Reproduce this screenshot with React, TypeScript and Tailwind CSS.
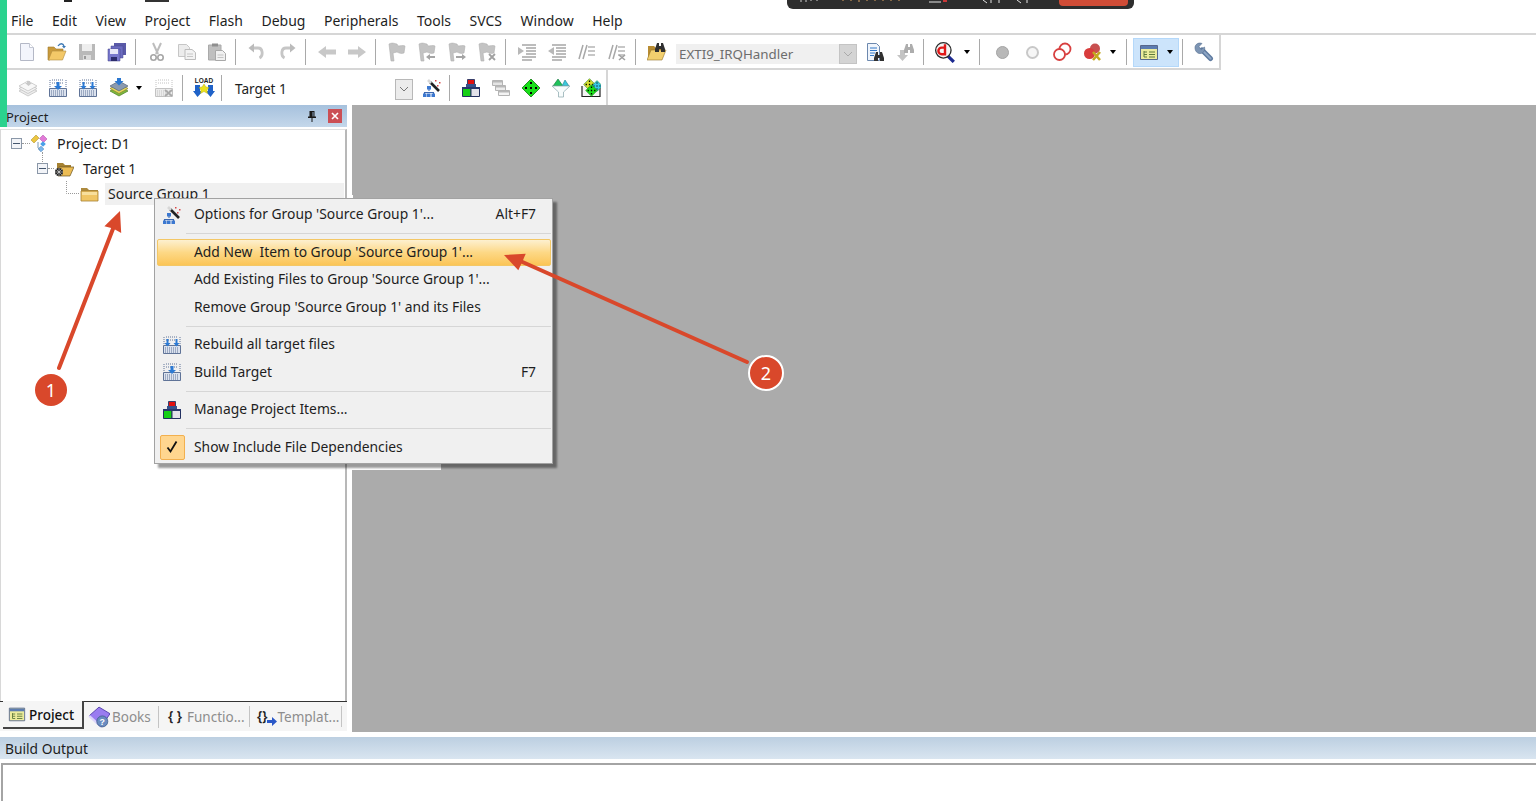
import type { ReactNode } from "react";

const font = "font-['Noto_Sans','Open_Sans',sans-serif]";

const Ico = ({ children, size = 20 }: { children: ReactNode; size?: number }) => (
  <svg width={size} height={size} viewBox="0 0 20 20" className="shrink-0">
    {children}
  </svg>
);

const Slot = ({ children, className = "" }: { children?: ReactNode; className?: string }) => (
  <div className={`w-[30px] h-[30px] shrink-0 flex items-center justify-center ${className}`}>{children}</div>
);

const Sep = ({ className = "ml-[3px] mr-[6px]" }: { className?: string }) => (
  <div className={`w-px h-[26px] bg-[#a9a9a9] shrink-0 ${className}`} />
);

const Caret = ({ className = "w-[13px]" }: { className?: string }) => (
  <div className={`shrink-0 flex justify-center ${className}`}>
    <div className="w-0 h-0 border-x-[3.5px] border-x-transparent border-t-[4px] border-t-black" />
  </div>
);

/* toolbar icons */
const NewIcon = () => (
  <Ico>
    <path d="M3.500 1.500h9l4 4v13h-13z" fill="#f3f5fc" stroke="#b4b8c6" />
    <path d="M12.500 1.500v4h4" fill="#fff" stroke="#c4c8d4" />
  </Ico>
);
const OpenIcon = () => (
  <Ico>
    <path d="M1 5h6l2 2h7v3H6l-3 8H1z" fill="#c99a3c" stroke="#a07a2c" strokeWidth=".6" />
    <path d="M5 9h14l-3.500 9H1.500z" fill="#f3c868" stroke="#b08a3c" strokeWidth=".6" />
    <path d="M11 4c2-3 5-3 6 0" fill="none" stroke="#3c78b4" strokeWidth="1.300" />
    <path d="M15 4h4l-2 2.500z" fill="#3c78b4" />
  </Ico>
);
const SaveIcon = () => (
  <Ico>
    <path d="M2 2h16v16H2z" fill="#b9b9b9" />
    <path d="M5 2h10v7H5z" fill="#eee" />
    <path d="M6 13h8v5H6z" fill="#dcdcdc" />
    <path d="M7 14h2v3H7z" fill="#9a9a9a" />
  </Ico>
);
const SaveAllIcon = () => (
  <Ico>
    <path d="M7 1h12v12H7z" fill="#5a5aa8" />
    <path d="M4 4h12v12H4z" fill="#6c6cc0" stroke="#484890" strokeWidth=".5" />
    <path d="M1 7h12v12H1z" fill="#7878cc" stroke="#3c3c84" strokeWidth=".5" />
    <path d="M3 7h8v5H3z" fill="#e8e8f8" />
    <path d="M4 15h6v4H4z" fill="#2c2c6c" />
  </Ico>
);
const CutIcon = () => (
  <Ico>
    <path d="M6 1l5 11M14 1L9 12" stroke="#bdbdbd" strokeWidth="2" />
    <circle cx="6.500" cy="15.500" r="2.700" fill="none" stroke="#a6a6a6" strokeWidth="1.600" />
    <circle cx="13.500" cy="15.500" r="2.700" fill="none" stroke="#a6a6a6" strokeWidth="1.600" />
  </Ico>
);
const CopyIcon = () => (
  <Ico>
    <path d="M1.500 2.500h8l3 3v9h-11z" fill="#ececec" stroke="#c6c6c6" />
    <path d="M8 7.500h7l3.500 3v7H8z" fill="#f2f2f2" stroke="#bcbcbc" />
    <path d="M10 12h6M10 14.500h6" stroke="#c6c6c6" />
  </Ico>
);
const PasteIcon = () => (
  <Ico>
    <path d="M1.500 3h12.500v15H1.500z" fill="#bfbfbf" stroke="#aaa" />
    <path d="M5 1.500h6v3H5z" fill="#8f8f8f" />
    <path d="M8.500 8.500h7l3 3v7h-10z" fill="#f0f0f0" stroke="#a8a8a8" />
    <path d="M10.500 13h6M10.500 15.500h6" stroke="#c4c4c4" />
  </Ico>
);
const UndoIcon = ({ flip = false }: { flip?: boolean }) => (
  <Ico>
    <g transform={flip ? "translate(20 0) scale(-1 1)" : undefined} fill="none">
      <path d="M5 6h6c5 0 5.500 8 1.500 10" stroke="#c6c6c6" strokeWidth="2.800" />
      <path d="M7 1.500v9L1.500 6z" fill="#bbb" />
    </g>
  </Ico>
);
const ArrowIcon = ({ flip = false }: { flip?: boolean }) => (
  <Ico>
    <g transform={flip ? "translate(20 0) scale(-1 1)" : undefined}>
      <path d="M1 10l8-6v3.500h10v5H9V16z" fill="#c8c8c8" />
    </g>
  </Ico>
);
const FlagIcon = ({ mark }: { mark?: "l" | "r" | "x" }) => (
  <Ico>
    <path d="M2 2c4-2 6 0 8 0l1 2c2 0 5-1 7 0l-1 7c-3 1-5 0-7-1l-4 1 1 8H4z" fill="#c3c3c3" stroke="#b0b0b0" strokeWidth=".6" />
    {mark === "l" && <path d="M9 15l4-3v2h5v2h-5v2z" fill="#a4a4a4" />}
    {mark === "r" && <path d="M19 15l-4-3v2H9v2h6v2z" fill="#a4a4a4" />}
    {mark === "x" && <path d="M12 12l6 6M18 12l-6 6" stroke="#a0a0a0" strokeWidth="1.800" />}
  </Ico>
);
const IndentIcon = ({ flip = false }: { flip?: boolean }) => (
  <Ico>
    <path d="M5 3h14M9 6h10M9 9h10M9 12h10M5 15h14M5 18h10" stroke="#a6a6a6" strokeWidth="1.400" />
    <path d={flip ? "M1 9l6-4v8z" : "M7 9L1 5v8z"} fill="#b8b8b8" />
  </Ico>
);
const CommentIcon = ({ x = false }: { x?: boolean }) => (
  <Ico>
    <path d="M2 17L6 3M6 17l4-14" stroke="#a8a8a8" strokeWidth="1.500" />
    <path d="M11 5h7M11 9h7M11 13h7" stroke="#b5b5b5" strokeWidth="1.300" />
    {x && <path d="M12 13l6 5M18 13l-6 5" stroke="#a0a0a0" strokeWidth="1.600" />}
  </Ico>
);
const Binoculars = ({ x, y, c = "#303030" }: { x: number; y: number; c?: string }) => (
  <g transform={`translate(${x} ${y})`} fill={c}>
    <path d="M0 6l2-6h2v3h2V0h2l2 6v3H6V6H4v3H0z" />
  </g>
);
const FindFolderIcon = () => (
  <Ico>
    <path d="M1 4h6l2 2h7v10H1z" fill="#b88c32" />
    <path d="M4 8h15l-4 10H0z" fill="#f2cf6e" stroke="#94742a" strokeWidth=".6" />
    <Binoculars x={8} y={1} />
  </Ico>
);
const FindDocIcon = () => (
  <Ico>
    <path d="M2.500 1.500h9l3 3v14h-12z" fill="#f0f5fc" stroke="#6c88ae" />
    <path d="M5 6h7M5 8.500h7M5 11h5M5 13.500h4" stroke="#3278c8" />
    <Binoculars x={9} y={10} />
  </Ico>
);
const FindGreyIcon = () => (
  <Ico>
    <path d="M5 8h5v5h3l-5.500 6L2 13h3z" fill="#c4c4c4" />
    <Binoculars x={9} y={2} c="#adadad" />
  </Ico>
);
const DebugIcon = () => (
  <Ico size={22}>
    <path d="M12 13l6 6" stroke="#1c2a90" strokeWidth="3" />
    <circle cx="8.500" cy="8.500" r="7" fill="#f4f4f4" stroke="#2a2a2a" strokeWidth="1.200" />
    <path d="M10 3v9H7a2.500 2.500 0 0 1 0-6h3" fill="none" stroke="#e01818" strokeWidth="2.200" />
  </Ico>
);
const WindowIcon = ({ size = 20 }: { size?: number }) => (
  <Ico size={size}>
    <path d="M1.500 3.500h17v14h-17z" fill="#ecec9c" stroke="#58688c" />
    <path d="M2 4h16v3H2z" fill="#5c7cb0" />
    <path d="M5 9v6M5 10h3M5 12.500h3M5 15h3M10 10h6M10 12.500h6M10 15h6" stroke="#5e7a3c" />
  </Ico>
);
const WrenchIcon = () => (
  <Ico>
    <path d="M8 8l8.500 8.500" stroke="#5f7ba0" strokeWidth="5" strokeLinecap="round" />
    <path d="M8 8l8.500 8.500" stroke="#8ea6c4" strokeWidth="2" strokeLinecap="round" />
    <path d="M1 5.500C1 2.500 4.500 0 8 1.500L5 4.500l2 3 3.500-2.500C11.500 9 9 11.500 6 11.500 3 11.500 1 9 1 5.500z" fill="#7d95b4" stroke="#566e90" strokeWidth=".6" />
  </Ico>
);
const LayersIcon = ({ color = false }: { color?: boolean }) => (
  <Ico>
    <path d="M1 13l9-5 9 5-9 5z" fill={color ? "#7cb83c" : "#ececec"} stroke={color ? "#4e7c24" : "#bbb"} strokeWidth=".7" />
    <path d="M1 10.500l9-5 9 5-9 5z" fill={color ? "#e6d85c" : "#f2f2f2"} stroke={color ? "#8c8230" : "#bbb"} strokeWidth=".7" />
    <path d="M1 8l9-5 9 5-9 5z" fill={color ? "#8a9ab0" : "#f8f8f8"} stroke={color ? "#566478" : "#bbb"} strokeWidth=".7" />
    {color ? <path d="M8 0h4v3h2.500L10 7.500 5.500 3H8z" fill="#2c78d0" /> : <path d="M9 3h3v2h2l-3.500 3L7 5h2z" fill="#c8c8c8" />}
  </Ico>
);
const GridIcon = ({ arrows = 1, grey = false }: { arrows?: number; grey?: boolean }) => {
  const c = grey ? "#c2c2c2" : "#5f7397";
  const b = grey ? "#ececec" : "#dbe2ee";
  return (
    <Ico>
      <path d="M1.500 10.500h17v8h-17z" fill={b} stroke={c} />
      <path d="M3 13h14M3 15h14M3 17h14" stroke={c} strokeDasharray="1 1" />
      <path d="M2 2v7M18 2v7" stroke={c} strokeDasharray="1 1" />
      <path d="M4 2h12M4 5h12" stroke={c} strokeDasharray="1 1" />
      {!grey && arrows === 1 && <path d="M8.500 4h3v4H14l-4 4-4-4h2.500z" fill="#2c7ad4" />}
      {!grey && arrows === 2 && (
        <path d="M4.500 4h2v4h2l-3 3.500L2.500 8h2zM13.500 4h2v4h2l-3 3.500-3-3.500h2z" fill="#2c7ad4" />
      )}
      {grey && <path d="M11 12l7 6M18 12l-7 6" stroke="#a8a8a8" strokeWidth="1.800" />}
    </Ico>
  );
};
const LoadIcon = () => (
  <svg width="22" height="22" viewBox="0 0 22 22" className="shrink-0">
    <text x="11" y="5.500" textAnchor="middle" fontSize="6.500" fontWeight="700" fontFamily="Liberation Sans" fill="#222">
      LOAD
    </text>
    <path d="M2 8h5v6h3l-5.500 6L0 14h2zM15 8h5v6h2l-4.500 6-5-6h2.500z" fill="#1f62c8" />
    <path d="M11 7l2 3 3 .5-2 2.500.5 3.500-3.500-2-3.500 2 .5-3.500-2-2.500 3-.5z" fill="#ece21c" stroke="#a8a018" strokeWidth=".4" />
  </svg>
);
const WandIcon = () => (
  <Ico>
    <path d="M8 4l9 9" stroke="#222" strokeWidth="2.600" />
    <path d="M6 2l3 3" stroke="#d8d8d8" strokeWidth="2.600" />
    <path d="M7 9v4M2.500 17v-2.500h9V17" fill="none" stroke="#3c68b0" strokeWidth="1.100" />
    <path d="M5 8h4v3.500H5zM1 15.500h3.500V19H1zM5 15.500h3.500V19H5zM9.500 15.500H13V19H9.500z" fill="#3c78d0" />
    <path d="M13 2h1.500v1.500H13zM17 4h1.500v1.500H17zM15 7h1.500v1.500H15z" fill="#d84848" />
  </Ico>
);
const BlocksIcon = () => (
  <Ico>
    <path d="M6.500 1.500h7v7h-7z" fill="#e01010" stroke="#38406c" />
    <path d="M5 6h10v3H5z" fill="#36508c" />
    <path d="M1.500 10.500h8.500v8H1.500z" fill="#16d016" stroke="#223060" />
    <path d="M10 10.500h8.500v8H10z" fill="#e2e2ea" stroke="#223060" />
    <path d="M1 9h18v2H1z" fill="#28386c" />
  </Ico>
);
const WindowsIcon = () => (
  <Ico>
    <path d="M1.500 2.500h10v5h-10z" fill="#e4e4e4" stroke="#b4b4b4" />
    <path d="M4.500 7.500h10v5h-10z" fill="#ececec" stroke="#b4b4b4" />
    <path d="M7.500 12.500h11v5h-11z" fill="#f4f4f4" stroke="#b4b4b4" />
    <path d="M2 3h9v1.500H2zM5 8h9v1.500H5zM8 13h10v1.500H8z" fill="#b8b8b8" />
  </Ico>
);
const Diamond = ({ x = 0, y = 0, s = 1, c = "#19e019" }: { x?: number; y?: number; s?: number; c?: string }) => (
  <g transform={`translate(${x} ${y}) scale(${s})`}>
    <path d="M10 1l9 9-9 9-9-9z" fill={c} stroke="#0e7a0e" strokeWidth=".8" />
    <path d="M9 4h2v2H9zM4 9h2v2H4zM14 9h2v2h-2zM9 14h2v2H9zM9 9h2v2H9z" fill="#000" />
  </g>
);
const FunnelIcon = () => (
  <Ico>
    <path d="M2 8l5-7 5 7z" fill="#1fc25a" stroke="#12703a" strokeWidth=".6" />
    <path d="M11 8l3-6 4 6z" fill="#3cc8dc" stroke="#1a7c8c" strokeWidth=".6" />
    <path d="M1 8h18l-6.500 6v5h-5v-5z" fill="#f8fcfc" stroke="#94aeb4" strokeWidth=".8" />
  </Ico>
);
const ManyDiamondsIcon = () => (
  <Ico>
    <path d="M1 8v10.500h18V8" fill="#f4f4f4" stroke="#222" strokeWidth="1.200" />
    <Diamond x={2} y={0} s={0.65} c="#d8e030" />
    <Diamond x={10} y={2} s={0.6} c="#38c8e8" />
    <Diamond x={4} y={6} s={0.65} />
  </Ico>
);

const PinIcon = () => (
  <svg width="10" height="12" viewBox="0 0 10 12">
    <path d="M2.500 1h5v5.500H9V8H1V6.500h1.500zM4.500 8h1v4h-1z" fill="#1a1a1a" />
    <path d="M5.500 2v4.500h1V2z" fill="#8aa4c0" />
  </svg>
);
const Minus = () => (
  <div className="w-[11px] h-[11px] shrink-0 border border-[#8a97a8] bg-[#f2f4f8] flex items-center justify-center">
    <div className="w-[7px] h-px bg-[#44566e]" />
  </div>
);
const ProjectIcon = () => (
  <Ico>
    <path d="M1 6l5-5 3 3-5 5z" fill="#ecc640" stroke="#a88a20" strokeWidth=".5" />
    <path d="M13 1l4 4-3.500 3.500-4-4z" fill="#e27ad8" stroke="#a84ca0" strokeWidth=".5" />
    <path d="M11 8h4v4h-4z" fill="#4aa0e8" transform="rotate(45 13 10)" />
    <path d="M9 13h4v4H9z" fill="#7ab8ee" stroke="#3c78b4" strokeWidth=".5" transform="rotate(45 11 15)" />
    <path d="M8 8v6l2 2" fill="none" stroke="#7a9ab8" />
  </Ico>
);
const TargetFolderIcon = () => (
  <Ico>
    <path d="M3 4h6l2 2h6v5H3z" fill="#a68232" />
    <path d="M5 8h15l-4 9H4z" fill="#ecbc54" stroke="#6c5420" strokeWidth=".7" />
    <circle cx="5" cy="13" r="4" fill="#222" />
    <path d="M1 13h8M5 9v8M2 10l6 6M8 10l-6 6" stroke="#fff" strokeWidth=".5" />
  </Ico>
);
const GroupFolderIcon = () => (
  <Ico>
    <path d="M1 4h6l2 2h9v2H1z" fill="#ad8a3e" />
    <path d="M1 7h17v10H1z" fill="#f0c564" stroke="#a68232" strokeWidth=".8" />
    <path d="M2 8h15v3H2z" fill="#f8df9c" />
  </Ico>
);
const BooksIcon = () => (
  <Ico size={22}>
    <path d="M1 9l9-8 10 6-8 12z" fill="#9a7cf0" stroke="#5a48b0" strokeWidth=".9" />
    <path d="M1 9l11 10" stroke="#dcd4fa" strokeWidth="2" />
    <circle cx="13" cy="14" r="5" fill="#6a8cc0" stroke="#3c5a88" strokeWidth=".7" />
    <text x="13" y="17" textAnchor="middle" fontSize="8" fontWeight="700" fill="#fff" fontFamily="Liberation Sans">?</text>
  </Ico>
);
const TemplateArrow = () => (
  <svg width="10" height="9" viewBox="0 0 10 9" className="self-end mb-[1px] -ml-[1px]">
    <path d="M0 3h5V0l5 4.500L5 9V6H0z" fill="#2a58c8" />
  </svg>
);

/* row data */
const MenuRow = ({
  icon,
  label,
  shortcut,
  active,
}: {
  icon?: ReactNode;
  label: string;
  shortcut?: string;
  active?: boolean;
}) => (
  <div
    className={`h-[27.5px] flex items-center whitespace-pre ${
      active ? "rounded-[2px] border border-[#f3c766] bg-gradient-to-b from-[#fdf0cf] via-[#fdd885] to-[#fbc556]" : ""
    }`}
  >
    <div className={`flex items-center justify-center shrink-0 ${active ? "w-[36px]" : "w-[37px] pr-[7px]"}`}>{icon}</div>
    <span className="flex-1">{label}</span>
    {shortcut && <span className="pr-[15px]">{shortcut}</span>}
  </div>
);
const MenuSep = () => (
  <div className="h-[10px] flex items-center pl-[29px]">
    <div className="h-px w-full bg-[#d6d6d6]" />
  </div>
);

const menus = ["File", "Edit", "View", "Project", "Flash", "Debug", "Peripherals", "Tools", "SVCS", "Window", "Help"];

export default function App() {
  return (
    <div className={`relative w-[1536px] h-[801px] overflow-hidden bg-white flex flex-col text-[14px] text-[#1e1e1e] ${font}`}>
      {/* menu bar */}
      <div className="h-[35px] shrink-0 flex items-center gap-[18.5px] pl-[11px] pt-[7px] border-b-2 border-[#d6d6d6]">
        {menus.map((m) => (
          <span key={m}>{m}</span>
        ))}
      </div>

      {/* toolbar 1 */}
      <div className="h-[35px] w-[1221px] shrink-0 flex items-center pt-px pl-[12px] border-b-2 border-r-2 border-[#d6d6d6]">
        <Slot><NewIcon /></Slot>
        <Slot><OpenIcon /></Slot>
        <Slot><SaveIcon /></Slot>
        <Slot><SaveAllIcon /></Slot>
        <Sep />
        <Slot><CutIcon /></Slot>
        <Slot><CopyIcon /></Slot>
        <Slot><PasteIcon /></Slot>
        <Sep />
        <Slot><UndoIcon /></Slot>
        <Slot><UndoIcon flip /></Slot>
        <Sep />
        <Slot><ArrowIcon /></Slot>
        <Slot><ArrowIcon flip /></Slot>
        <Sep />
        <Slot><FlagIcon /></Slot>
        <Slot><FlagIcon mark="l" /></Slot>
        <Slot><FlagIcon mark="r" /></Slot>
        <Slot><FlagIcon mark="x" /></Slot>
        <Sep />
        <Slot><IndentIcon /></Slot>
        <Slot><IndentIcon flip /></Slot>
        <Slot><CommentIcon /></Slot>
        <Slot><CommentIcon x /></Slot>
        <Sep />
        <Slot><FindFolderIcon /></Slot>
        <div className="ml-[4px] mt-[3px] w-[181px] h-[20px] shrink-0 flex items-center bg-[#f0f0f0] pl-[3px] text-[13.35px] text-[#6d6d6d]">
          <span className="flex-1">EXTI9_IRQHandler</span>
          <div className="w-[18px] h-[20px] bg-[#d4d4d4] border border-[#c4c4c4] flex items-center justify-center">
            <svg width="10" height="6" viewBox="0 0 10 6"><path d="M1 1l4 4 4-4" fill="none" stroke="#aaa" /></svg>
          </div>
        </div>
        <Slot className="ml-[3px]"><FindDocIcon /></Slot>
        <Slot><FindGreyIcon /></Slot>
        <Sep />
        <Slot><DebugIcon /></Slot>
        <Caret />
        <Sep className="ml-[6px] mr-[7px]" />
        <Slot>
          <div className="w-[13px] h-[13px] rounded-full bg-[#b8b8b8] border border-[#a4a4a4]" />
        </Slot>
        <Slot>
          <div className="w-[13px] h-[13px] rounded-full bg-[#f6f6f6] border-2 border-[#c8c8c8]" />
        </Slot>
        <Slot>
          <Ico>
            <circle cx="13" cy="7" r="5.500" fill="#fff" stroke="#d84040" strokeWidth="1.800" />
            <circle cx="7.500" cy="12.500" r="5.500" fill="#fff" stroke="#d84040" strokeWidth="1.800" />
          </Ico>
        </Slot>
        <Slot className="ml-px">
          <Ico>
            <circle cx="12" cy="6.500" r="5" fill="#c85050" />
            <circle cx="6.500" cy="11.500" r="5.500" fill="#d83c3c" />
            <path d="M10 10l7 8M17 10l-7 8" stroke="#c4a820" strokeWidth="2.600" />
          </Ico>
        </Slot>
        <Caret className="w-[10px]" />
        <Sep className="ml-[8px] mr-[6px]" />
        <div className="w-[46px] h-[29px] shrink-0 flex items-center pl-[5px] bg-[#cce4fb] border border-[#b4d8fa]">
          <WindowIcon />
          <Caret className="w-[21px]" />
        </div>
        <Sep className="ml-[3px] mr-[6px]" />
        <Slot><WrenchIcon /></Slot>
      </div>

      {/* toolbar 2 */}
      <div className="h-[35px] w-[608px] shrink-0 flex items-center pl-[13px] border-r-2 border-[#d6d6d6]">
        <Slot><LayersIcon /></Slot>
        <Slot><GridIcon /></Slot>
        <Slot><GridIcon arrows={2} /></Slot>
        <Slot className="ml-px"><LayersIcon color /></Slot>
        <Caret className="w-[10px]" />
        <Slot className="ml-[5px]"><GridIcon grey /></Slot>
        <Sep />
        <Slot><LoadIcon /></Slot>
        <Sep className="ml-[2px] mr-[13px]" />
        <div className="w-[160px] shrink-0 pt-[4px] text-[13.6px]">Target 1</div>
        <div className="w-[18px] h-[21px] mt-[3px] shrink-0 bg-[#ececec] border border-[#b8b8b8] flex items-center justify-center">
          <svg width="10" height="6" viewBox="0 0 10 6"><path d="M1 1l4 4 4-4" fill="none" stroke="#777" /></svg>
        </div>
        <Slot className="ml-[4px]"><WandIcon /></Slot>
        <Sep className="ml-[2px] mr-[6px]" />
        <Slot><BlocksIcon /></Slot>
        <Slot><WindowsIcon /></Slot>
        <Slot><Ico><Diamond /></Ico></Slot>
        <Slot><FunnelIcon /></Slot>
        <Slot><ManyDiamondsIcon /></Slot>
      </div>

      {/* main */}
      <div className="h-[627px] shrink-0 flex">
        <div className="w-[347px] shrink-0 flex flex-col">
          <div className="h-[22px] shrink-0 flex items-center pl-[6px] pr-[5px] bg-gradient-to-b from-[#a6c1dd] to-[#c4d7ea]">
            <span className="flex-1 pt-[3px] text-[13px]">Project</span>
            <div className="mr-[11px] flex"><PinIcon /></div>
            <div className="w-[14px] h-[14px] bg-[#cb4f55] flex items-center justify-center">
              <svg width="8" height="8" viewBox="0 0 8 8"><path d="M1 1l6 6M7 1L1 7" stroke="#fff" strokeWidth="1.600" /></svg>
            </div>
          </div>

          {/* tree */}
          <div className="relative flex-1 mt-[2px] pt-px border-t border-l border-r-2 border-t-[#e0e0e0] border-l-[#d8d8d8] border-r-[#b8b8b8]">
            <div className="absolute left-[41px] top-[22px] h-[12px] border-l border-dotted border-[#999]" />
            <div className="h-[25px] flex items-center pl-[10px]">
              <Minus />
              <div className="w-[8px] border-t border-dotted border-[#999]" />
              <ProjectIcon />
              <span className="ml-[7px] text-[14.3px]">Project: D1</span>
            </div>
            <div className="h-[25px] flex items-center pl-[36px]">
              <Minus />
              <div className="w-[6px] border-t border-dotted border-[#999]" />
              <TargetFolderIcon />
              <span className="ml-[9px]">Target 1</span>
            </div>
            <div className="h-[25px] flex items-center pl-[65px]">
              <svg width="14" height="25" viewBox="0 0 14 25" className="shrink-0">
                <path d="M.5 0v12.500H14" fill="none" stroke="#999" strokeDasharray="1 1" />
              </svg>
              <GroupFolderIcon />
              <span className="ml-[5px] h-[22px] flex-1 mr-px pl-[3px] flex items-center bg-[#f0f0f0]">Source Group 1</span>
            </div>
          </div>

          {/* tabs */}
          <div className="h-[30px] shrink-0 flex bg-[#f5f5f5] mb-px text-[13.5px]">
            <div className="w-[3px] border-t border-[#333]" />
            <div className="w-[81px] h-[28px] flex items-center pl-[5px] gap-[2px] bg-[#f5f5f5] border-r-2 border-b-2 border-[#444] font-medium text-[#111]">
              <WindowIcon size={18} />
              <span className="ml-px pt-[2px]">Project</span>
            </div>
            <div className="flex-1 flex items-center border-t border-[#333]">
              <div className="w-[75px] flex items-center pl-[4px] gap-[2px] text-[#8d8d8d] border-r border-[#c4c4c4]">
                <BooksIcon />
                <span className="pt-px">Books</span>
              </div>
              <div className="w-[91px] flex items-center pl-[9px] gap-[5px] text-[#8d8d8d] border-r border-[#c4c4c4]">
                <span className="text-[#222] font-semibold">{"{ }"}</span>
                <span className="pt-px">Functio...</span>
              </div>
              <div className="w-[92px] flex items-center pl-[7px] text-[#8d8d8d] border-r border-[#c4c4c4]">
                <span className="text-[#222] font-semibold">{"{}"}</span>
                <TemplateArrow />
                <span className="ml-px pt-px">Templat...</span>
              </div>
            </div>
          </div>
        </div>
        <div className="flex-1 ml-[5px] bg-[#ababab]" />
      </div>

      {/* build output */}
      <div className="mt-[5px] h-[22px] shrink-0 flex items-center pl-[5px] pt-[3px] text-[13.8px] bg-gradient-to-b from-[#bccfe1] to-[#d9e5f0]">Build Output</div>
      <div className="mt-[4px] flex-1 ml-px border-t-2 border-l-2 border-[#a4a4a4]" />

      {/* context menu */}
      <div className="absolute left-[347px] top-[195px] w-[6px] h-[8px] bg-white" />
      <div className="absolute left-[347px] top-[464px] w-[94px] h-[6px] bg-white" />
      <div className="absolute left-[154px] top-[198px] w-[399px] h-[266px] pl-[2px] pr-px pt-[2px] border border-[#a2a2a2] bg-[#f0f0f0] text-[13.85px] shadow-[4px_4px_2px_rgba(0,0,0,0.4)]">
        <MenuRow icon={<WandIcon />} label="Options for Group 'Source Group 1'..." shortcut="Alt+F7" />
        <MenuSep />
        <MenuRow active label="Add New  Item to Group 'Source Group 1'..." />
        <MenuRow label="Add Existing Files to Group 'Source Group 1'..." />
        <MenuRow label="Remove Group 'Source Group 1' and its Files" />
        <MenuSep />
        <MenuRow icon={<GridIcon arrows={2} />} label="Rebuild all target files" />
        <MenuRow icon={<GridIcon />} label="Build Target" shortcut="F7" />
        <MenuSep />
        <MenuRow icon={<BlocksIcon />} label="Manage Project Items..." />
        <MenuSep />
        <MenuRow
          icon={
            <div className="w-[25px] h-[25px] rounded-[2px] bg-[#ffd68f] border border-[#f2b04f] flex items-center justify-center">
              <svg width="14" height="14" viewBox="0 0 14 14"><path d="M2.500 7.500l3 4 6-10" fill="none" stroke="#111" strokeWidth="1.800" /></svg>
            </div>
          }
          label="Show Include File Dependencies"
        />
      </div>

      {/* window chrome that lies over the page */}
      <div className="absolute left-0 top-0 w-[7px] h-[127px] bg-[#2bd28e]" />
      <div className="absolute left-[64px] top-0 w-[8px] h-[2px] bg-[#222]" />
      <div className="absolute left-[145px] top-0 w-[24px] h-[2px] bg-[#333]" />
      <div className="absolute left-[787px] top-0 w-[347px] h-[9px] rounded-b-[6px] bg-[#2e2e2e] flex justify-end pr-[6px]">
        <svg width="270" height="4" viewBox="0 0 270 4" className="absolute left-0 top-0">
          <path d="M14 0v2M19 0v2M24 0v1M30 0v1" stroke="#cfcfcf" />
          <path d="M56 0v1M64 0v1M72 0v2M80 0v1M88 0v1M96 0v1M104 0v1M112 0v1" stroke="#d8a060" />
          <path d="M142 2h12M196 0l4 3M204 0v3M212 0v3M230 0l4 3M240 0v3" stroke="#e4e4e4" />
          <path d="M156 1h4" stroke="#c83838" strokeWidth="2" />
        </svg>
        <div className="w-[69px] h-[6px] rounded-b-[4px] bg-[#d04c36]" />
      </div>

      {/* annotations */}
      <svg width="1536" height="801" viewBox="0 0 1536 801" className="absolute left-0 top-0 pointer-events-none">
        <path d="M59 368l57-147" stroke="#d9482b" strokeWidth="4" strokeLinecap="round" />
        <path d="M120 211l1.200 21.900-8-4.500-8.800-2.100z" fill="#d9482b" />
        <path d="M747 362L518 260" stroke="#d9482b" strokeWidth="4" strokeLinecap="round" />
        <path d="M504 255l21.700-1.200-3.500 8.300-3.900 8.100z" fill="#d9482b" />
      </svg>
      <div className="absolute left-[35px] top-[374px] w-[32px] h-[32px] rounded-full bg-[#d9482b] text-white text-[18px] flex items-center justify-center">1</div>
      <div className="absolute left-[748px] top-[355px] w-[36px] h-[36px] rounded-full bg-[#d9482b] border-2 border-white text-white text-[18px] flex items-center justify-center">2</div>
    </div>
  );
}
